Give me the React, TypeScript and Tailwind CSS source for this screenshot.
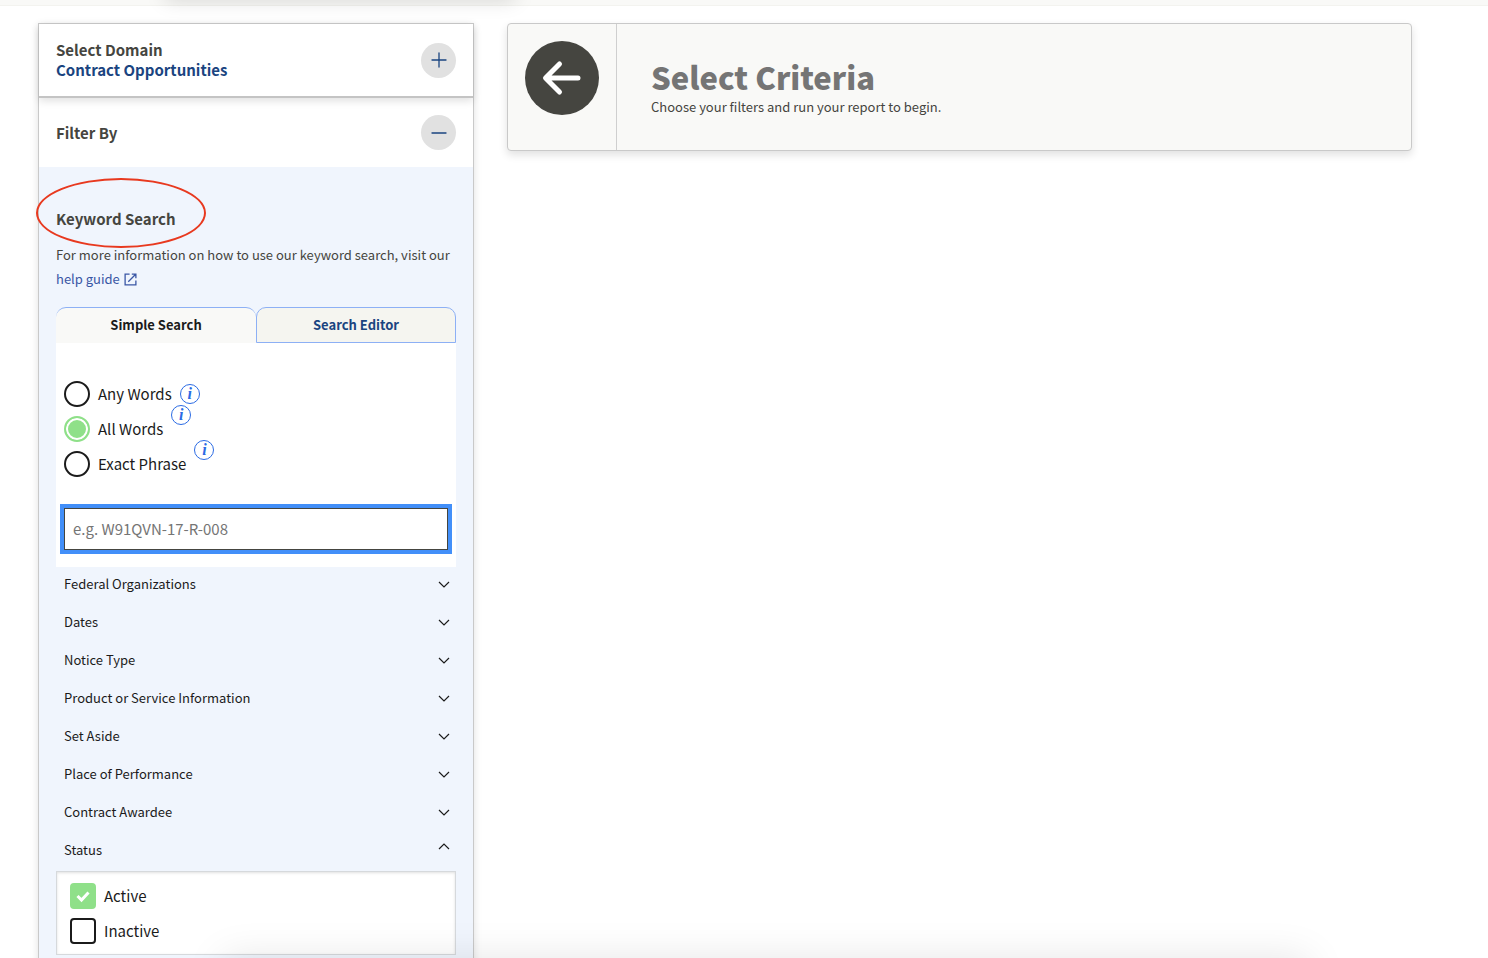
import { useState } from 'react';
import { Minus, Plus } from 'lucide-react';

interface Section {
  title: string;
  open?: boolean;
}

const sections: Section[] = [
  { title: 'Federal Organizations' },
  { title: 'Dates' },
  { title: 'Notice Type' },
  { title: 'Product or Service Information' },
  { title: 'Set Aside' },
  { title: 'Place of Performance' },
  { title: 'Contract Awardee' },
  { title: 'Status', open: true },
];

const searchModes = ['Any Words', 'All Words', 'Exact Phrase'];

function Chevron({ open }: { open?: boolean }) {
  return (
    <svg
      className={open ? 'w-3 h-3 rotate-180 mb-1.5' : 'w-3 h-3'}
      viewBox="0 0 12 12"
      fill="none"
      stroke="#1b1b1b"
      strokeWidth="1.2"
    >
      <path d="M1 4l5 5 5-5" />
    </svg>
  );
}

function InfoButton({ raised }: { raised: boolean }) {
  return (
    <button
      type="button"
      aria-label="More information"
      className={`flex items-center justify-center size-5 rounded-full border border-[#2b6be4] bg-white text-[#2b6be4] font-['Liberation_Serif',serif] italic font-bold text-base leading-4 ${
        raised ? 'self-start -mt-1.5' : ''
      }`}
    >
      i
    </button>
  );
}

export default function App() {
  const [mode, setMode] = useState('All Words');
  const [keyword, setKeyword] = useState('');
  const [status, setStatus] = useState({ Active: true, Inactive: false });

  return (
    <div className="relative h-screen overflow-hidden bg-white font-['Noto_Sans_CJK_SC',sans-serif] text-[#1b1b1b]">
      {/* Bottom edge of the page header */}
      <div className="relative h-1.5 bg-[#f9f9f7] border-b border-[#f3f3ef]">
        <div className="absolute bottom-full left-[165px] w-[350px] h-5 shadow-[0_0_20px_rgba(0,0,0,0.15)]"></div>
      </div>

      <div className="flex items-start gap-[33px] pt-[17px] pl-[38px] pr-19">
        {/* Filter sidebar */}
        <aside className="w-[436px] shrink-0 border border-[#c9c9c9] bg-white shadow-[0_2px_8px_rgba(0,0,0,0.12)]">
          <div className="relative flex items-center justify-between h-[74px] px-[17px] border-b-2 border-[#c4c4c4] shadow-[0_3px_8px_rgba(0,0,0,0.12)]">
            <div className="text-[15px] leading-5 font-bold">
              <h2 className="text-[#454540]">Select Domain</h2>
              <p className="text-[#1a4480]">Contract Opportunities</p>
            </div>
            <button type="button" aria-label="Expand domains" className="flex items-center justify-center size-[35px] rounded-full bg-[#e1e1e1] text-[#1a4480]">
              <Plus size={24} strokeWidth={1.3} />
            </button>
          </div>

          <div className="flex items-center justify-between h-[69px] px-[17px]">
            <h2 className="text-[15px] leading-5 font-bold text-[#454540]">Filter By</h2>
            <button type="button" aria-label="Collapse filters" className="flex items-center justify-center size-[35px] rounded-full bg-[#e1e1e1] text-[#1a4480]">
              <Minus size={24} strokeWidth={1.3} />
            </button>
          </div>

          <div className="px-[17px] pt-10 pb-20 bg-[#f0f5fd]">
            <div className="relative">
              <h3 className="text-[15px] leading-6 font-bold text-[#454540]">Keyword Search</h3>
              <div className="absolute -top-[29px] -left-5 w-[170px] h-[70px] rounded-[50%] border-2 border-[#e8391f]"></div>
            </div>
            <p className="mt-3 text-[13px] leading-6 text-[#454540]">
              For more information on how to use our keyword search, visit our{' '}
              <a href="#help" className="text-[#3a57a5] whitespace-nowrap">
                help guide
                <svg className="inline-block w-[13px] h-[13px] ml-1 align-[-2px]" viewBox="0 0 14 14" fill="none" stroke="currentColor" strokeWidth="1.4">
                  <path d="M6 1.2H1.2v11.6h11.6V8M8.4 1.2h4.4v4.4M12.6 1.4L4.6 9.4" />
                </svg>
              </a>
            </p>

            {/* Search tabs */}
            <div role="tablist" className="mt-4 grid grid-cols-2 text-[13px] leading-5 font-bold">
              <button type="button" role="tab" aria-selected="true" className="h-9 pb-px rounded-t-[10px] border-t border-[#8db0f5] bg-[#f9f9f7]">
                Simple Search
              </button>
              <button type="button" role="tab" aria-selected="false" className="h-9 rounded-t-[10px] border border-[#8db0f5] bg-[#f5f5f0] text-[#1a4480]">
                Search Editor
              </button>
            </div>

            <div className="h-[224px] px-2 pt-[33px] bg-white">
              {searchModes.map((name, i) => (
                <div key={name} className="flex items-center gap-2 h-[35px]">
                  <label className="flex items-center gap-2 text-[15px] leading-5">
                    <input
                      type="radio"
                      name="mode"
                      checked={mode === name}
                      onChange={() => setMode(name)}
                      className="appearance-none size-[26px] rounded-full border-2 border-[#1b1b1b] checked:border-[#8fe089] checked:bg-[#8fe089] checked:shadow-[inset_0_0_0_2px_#fff]"
                    />
                    {name}
                  </label>
                  <InfoButton raised={i > 0} />
                </div>
              ))}
              <input
                type="text"
                aria-label="Keyword"
                value={keyword}
                onChange={(e) => setKeyword(e.target.value)}
                placeholder="e.g. W91QVN-17-R-008"
                className="mt-[27px] w-full h-[42px] px-2 pb-0.5 border border-[#454540] bg-white text-[15px] placeholder:text-[#757575] outline-4 outline-[#428ff9]"
              />
            </div>

            {sections.map((section) => (
              <button
                key={section.title}
                type="button"
                aria-expanded={!!section.open}
                className="flex items-center justify-between w-full h-[38px] pl-2 pr-1.5 pb-1 text-[13px] leading-5"
              >
                {section.title}
                <Chevron open={section.open} />
              </button>
            ))}

            <div className="px-[13px] py-1.5 border border-[#d6d9dc] bg-white shadow-[inset_0_1px_3px_rgba(0,0,0,0.12)]">
              {(['Active', 'Inactive'] as const).map((name) => (
                <label key={name} className="flex items-center gap-2 h-[35px] text-[15px] leading-5">
                  <span className="relative size-[26px]">
                    <input
                      type="checkbox"
                      checked={status[name]}
                      onChange={() => setStatus({ ...status, [name]: !status[name] })}
                      className="block appearance-none size-[26px] rounded border-2 border-[#1b1b1b] checked:border-[#8fe089] checked:bg-[#8fe089]"
                    />
                    {status[name] && (
                      <svg className="absolute inset-0 pointer-events-none" viewBox="0 0 26 26" fill="none" stroke="#fff" strokeWidth="3">
                        <path d="M7.5 13l4 4 7-7.500" />
                      </svg>
                    )}
                  </span>
                  {name}
                </label>
              ))}
            </div>
          </div>
        </aside>

        {/* Report area */}
        <main className="flex flex-1 min-h-32 rounded border border-[#c9c9c9] bg-[#f9f9f7] shadow-[0_4px_8px_rgba(0,0,0,0.12)]">
          <div className="px-[17px] pt-[17px] border-r border-[#cfcfcf]">
            <button type="button" aria-label="Back to filters" className="block size-[74px] rounded-full bg-[#454540]">
              <svg viewBox="0 0 74 74" fill="none" stroke="#fff" strokeWidth="5" strokeLinecap="round" strokeLinejoin="round">
                <path d="M53 37H21M34.500 23L20.500 37l14 14" />
              </svg>
            </button>
          </div>
          <div className="pl-[34px] pt-8">
            <h1 className="text-[31px] leading-[42px] font-black text-[#757575]">Select Criteria</h1>
            <p className="text-[13px] leading-[18px] text-[#454540]">Choose your filters and run your report to begin.</p>
          </div>
        </main>
      </div>

      {/* Shadow cast by the bar docked below the fold */}
      <div className="absolute top-full left-[15%] right-[12%] h-20 shadow-[0_0_40px_rgba(0,0,0,0.1)]"></div>
    </div>
  );
}
